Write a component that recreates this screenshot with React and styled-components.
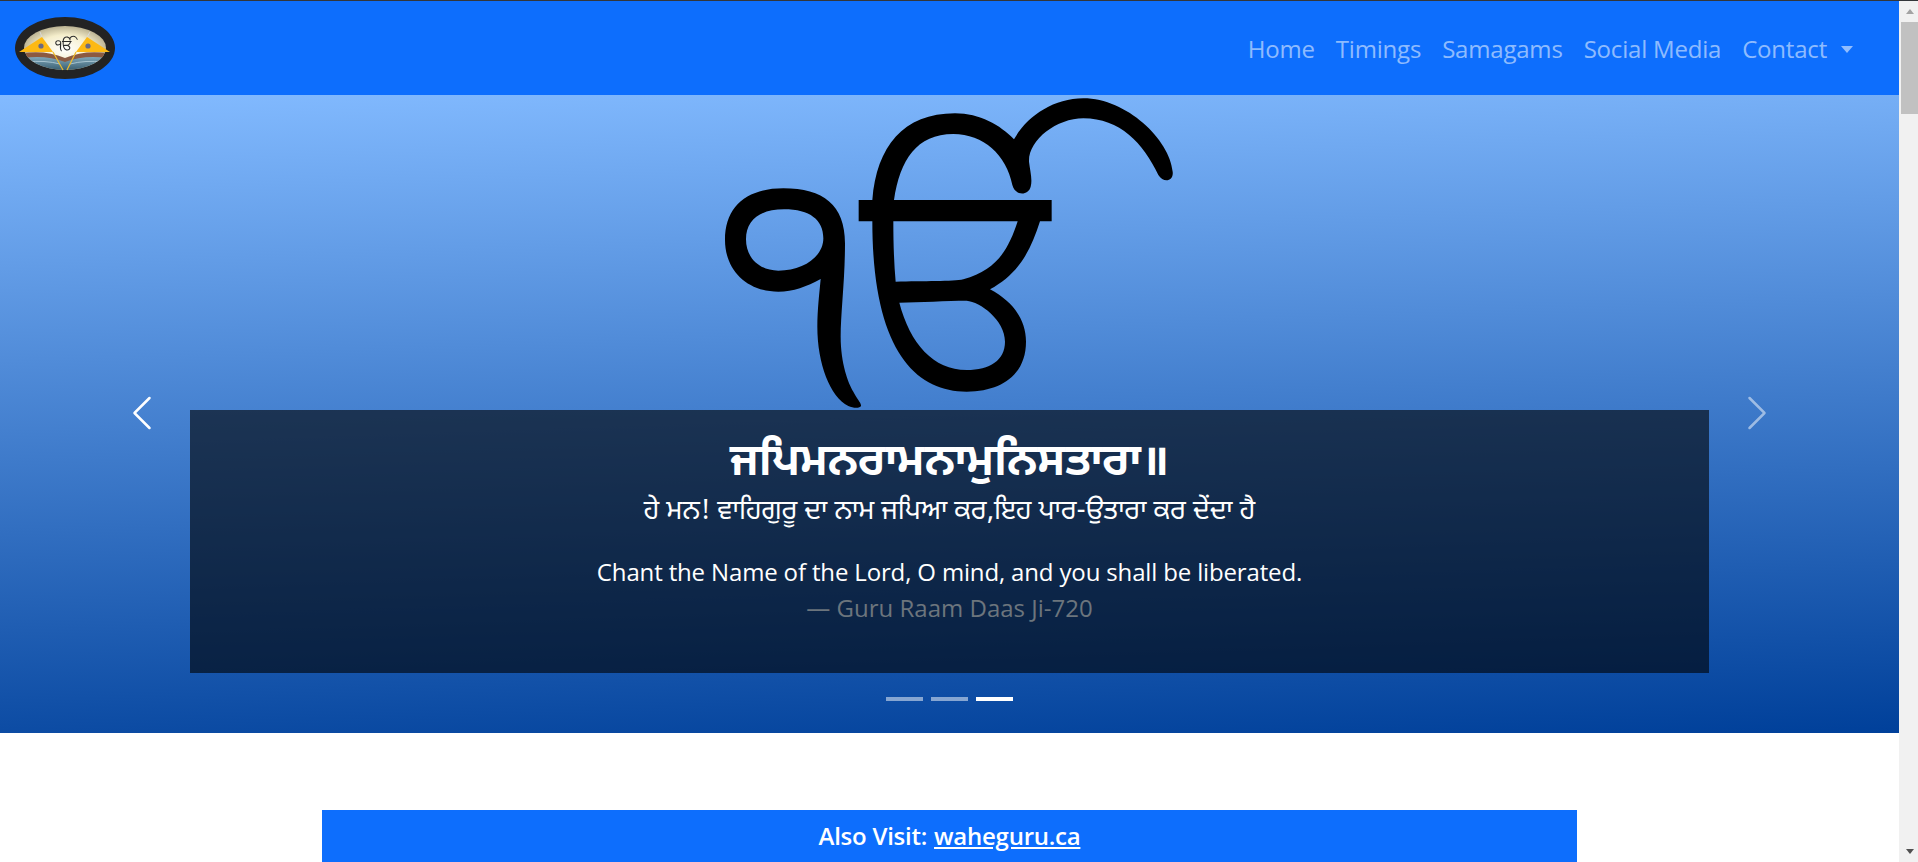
import React from 'react'
import styled, { createGlobalStyle } from 'styled-components'

const uiFont = `"Open Sans", "Noto Sans", "Liberation Sans", sans-serif`
const gurmukhiFont = `"Noto Sans Gurmukhi", "Lohit Gurmukhi", "Noto Sans", "Open Sans", sans-serif`

const GlobalStyle = createGlobalStyle`
  html, body {
    margin: 0;
    height: 862px;
    overflow: hidden;
    background: #fff;
    font-family: ${uiFont};
  }
`

const Shell = styled.div`
  height: 862px;
  display: flex;
  flex-direction: column;
  overflow: hidden;
  border-top: 1px solid #33363a;
  box-sizing: border-box;
`

const Viewport = styled.div`
  flex: 1;
  min-height: 0;
  display: flex;
`

const Page = styled.main`
  flex: 1;
  min-width: 0;
  overflow: hidden;
`

const Scrollbar = styled.div`
  width: 19px;
  flex: none;
  display: flex;
  flex-direction: column;
  align-items: flex-end;
  background: #f1f1f1;
`

const ScrollArrow = styled.div`
  width: 17px;
  height: 21px;
  display: flex;
  justify-content: center;
  align-items: center;
  margin-top: ${props => (props.$down ? 'auto' : '0')};

  &::before {
    content: '';
    border-left: 4.5px solid transparent;
    border-right: 4.5px solid transparent;
    border-${props => (props.$down ? 'top' : 'bottom')}: 5px solid ${props => (props.$down ? '#505050' : '#a3a3a3')};
  }
`

const ScrollThumb = styled.div`
  width: 17px;
  height: 92px;
  background: #c1c1c1;
`

const Navbar = styled.nav`
  height: 94px;
  box-sizing: border-box;
  padding: 0 46px 0 15px;
  display: flex;
  align-items: center;
  justify-content: space-between;
  background: #0d6efd;
`

const Menu = styled.ul`
  display: flex;
  align-items: center;
  gap: 21px;
  margin: 2px 0 0;
  padding: 0;
  list-style: none;
`

const MenuLink = styled.a`
  display: flex;
  align-items: center;
  font-size: 24px;
  line-height: 36px;
  letter-spacing: -0.2px;
  color: rgba(255, 255, 255, 0.55);
  text-decoration: none;
`

const Caret = styled.span`
  margin-left: 14px;
  border-top: 7px solid rgba(255, 255, 255, 0.55);
  border-left: 6px solid transparent;
  border-right: 6px solid transparent;
`

const Hero = styled.section`
  position: relative;
  height: 638px;
  display: flex;
  flex-direction: column;
  align-items: center;
  background: linear-gradient(178deg, #82baff 0%, #00409a 100%);
`

const IkOnkar = styled.svg`
  display: block;
  width: 460px;
  height: 315px;
`

const Caption = styled.div`
  position: absolute;
  left: 10%;
  right: 10%;
  top: 315px;
  height: 263px;
  box-sizing: border-box;
  padding-top: 25px;
  text-align: center;
  color: #fff;
  background: rgba(0, 0, 0, 0.6);
`

const Verse = styled.h1`
  margin: 0;
  font-family: ${gurmukhiFont};
  font-size: 44px;
  line-height: 60px;
  font-weight: 700;
`

const Meaning = styled.p`
  margin: 0;
  font-family: ${gurmukhiFont};
  font-size: 27px;
  line-height: 36px;
`

const Translation = styled.p`
  margin: 23px 0 0;
  font-size: 24px;
  line-height: 36px;
  letter-spacing: -0.15px;
`

const Attribution = styled.p`
  margin: 0;
  font-size: 24px;
  line-height: 36px;
  color: #6c757d;
`

const Control = styled.button`
  position: absolute;
  top: 0;
  bottom: 2px;
  ${props => (props.$side === 'left' ? 'left: 0;' : 'right: 0;')}
  width: 15%;
  padding: 0;
  display: flex;
  align-items: center;
  justify-content: center;
  border: 0;
  background: none;
  color: #fff;
  opacity: ${props => (props.$dim ? 0.5 : 1)};
`

const Indicators = styled.div`
  position: absolute;
  left: 0;
  right: 0;
  bottom: 32px;
  display: flex;
  justify-content: center;
  gap: 8px;
`

const Indicator = styled.span`
  width: 37px;
  height: 4px;
  background: #fff;
  opacity: ${props => (props.$active ? 1 : 0.5)};
`

const Content = styled.div`
  width: 1255px;
  margin: 77px auto 0;
`

const Banner = styled.div`
  height: 54px;
  box-sizing: border-box;
  padding-bottom: 3px;
  display: flex;
  align-items: center;
  justify-content: center;
  gap: 7px;
  background: #0d6efd;
  color: #fff;
  font-size: 24px;
  font-weight: 600;
  letter-spacing: -0.25px;

  a {
    color: inherit;
  }
`

const glyphPaths = (
  <>
    <path
      fillRule="evenodd"
      d="M422 597C380 620 340 635 295 635C200 635 135 570 135 480C135 380 200 325 310 325C430 325 495 375 495 490C495 600 482 700 482 770C482 850 505 910 520 935C530 955 545 970 543 978C540 985 520 985 505 978C450 950 412 850 412 740C412 690 418 640 422 597ZM312 388C240 388 198 420 198 478C198 535 240 572 295 572C370 572 430 530 430 475C430 420 390 388 312 388Z"
    />
    <path
      fillRule="evenodd"
      d="M577 360C590 200 670 100 825 100C900 100 960 135 1002 178C1040 110 1120 55 1210 55C1340 55 1470 180 1478 275C1482 305 1450 310 1435 285C1390 190 1320 115 1210 115C1130 115 1045 180 1047 245C1050 270 1058 300 1052 320C1045 348 1005 348 997 315C980 225 910 162 820 162C710 162 660 240 642 360L1115 360L1115 424L1080 424C1050 520 1010 585 930 628C1000 665 1038 720 1038 785C1038 880 970 935 860 935C700 935 577 800 577 424L536 424L536 360ZM640 424L1013 424C985 510 950 570 850 598C820 605 730 603 647 605C642 550 640 490 640 424ZM658 668C720 667 800 662 860 662C900 665 975 720 975 785C975 840 930 870 860 870C760 870 690 790 658 668Z"
    />
  </>
)

const Logo = () => (
  <svg width="100" height="62" viewBox="15 17 100 62" aria-label="logo">
    <defs>
      <radialGradient id="sky" cx="50%" cy="52%" r="58%">
        <stop offset="0%" stopColor="#ffffff" />
        <stop offset="55%" stopColor="#f5eecb" />
        <stop offset="100%" stopColor="#a89f80" />
      </radialGradient>
      <linearGradient id="water" x1="0" y1="0" x2="0" y2="1">
        <stop offset="0%" stopColor="#7fa6b8" />
        <stop offset="100%" stopColor="#2f5468" />
      </linearGradient>
      <clipPath id="inner">
        <ellipse cx="65" cy="48" rx="41" ry="22" />
      </clipPath>
    </defs>
    <ellipse cx="65" cy="48" rx="50" ry="31" fill="#232323" />
    <ellipse cx="65" cy="48" rx="41" ry="22" fill="url(#sky)" />
    <g clipPath="url(#inner)">
      <path d="M24 53Q46 50 65 58Q84 50 106 53V62H24Z" fill="#8b5a42" />
      <path d="M24 58Q46 55 65 62Q84 55 106 58V72H24Z" fill="url(#water)" />
      <path d="M26 62Q45 60 60 64M70 64Q85 60 104 62" stroke="#b9d2dc" strokeWidth="0.8" fill="none" />
    </g>
    <path d="M40 32L42 37M90 32L87 37" stroke="#d8d8d8" strokeWidth="1" />
    <path d="M42 37L19 52L53 52Z" fill="#fdb913" />
    <path d="M87 37L110 52L76 52Z" fill="#fdb913" />
    <path d="M53 52L63 70M76 52L67 70" stroke="#f0bb2a" strokeWidth="1.2" />
    <circle cx="41" cy="46" r="2.6" fill="#6a6a85" />
    <circle cx="88" cy="46" r="2.6" fill="#6a6a85" />
    <svg x="55" y="35" width="23" height="17" viewBox="120 45 1380 945" fill="#2a2a2a">
      {glyphPaths}
    </svg>
  </svg>
)

const Chevron = ({ flip }) => (
  <svg width="40" height="40" viewBox="0 0 16 16" fill="currentColor" style={flip ? { transform: 'scaleX(-1)' } : undefined}>
    <path d="M11.354 1.646a.5.5 0 0 1 0 .708L5.707 8l5.647 5.646a.5.5 0 0 1-.708.708l-6-6a.5.5 0 0 1 0-.708l6-6a.5.5 0 0 1 .708 0z" />
  </svg>
)

const links = ['Home', 'Timings', 'Samagams', 'Social Media']

export default function App() {
  return (
    <>
      <GlobalStyle />
      <Shell>
        <Viewport>
          <Page>
            <Navbar>
              <Logo />
              <Menu>
                {links.map(link => (
                  <li key={link}>
                    <MenuLink href="#">{link}</MenuLink>
                  </li>
                ))}
                <li>
                  <MenuLink href="#">
                    Contact
                    <Caret />
                  </MenuLink>
                </li>
              </Menu>
            </Navbar>
            <Hero>
              <IkOnkar viewBox="120 45 1380 945" fill="#000">
                {glyphPaths}
              </IkOnkar>
              <Control $side="left">
                <Chevron />
              </Control>
              <Control $side="right" $dim>
                <Chevron flip />
              </Control>
              <Caption>
                <Verse>ਜਪਿਮਨਰਾਮਨਾਮੁਨਿਸਤਾਰਾ॥</Verse>
                <Meaning>ਹੇ ਮਨ! ਵਾਹਿਗੁਰੂ ਦਾ ਨਾਮ ਜਪਿਆ ਕਰ,ਇਹ ਪਾਰ-ਉਤਾਰਾ ਕਰ ਦੇਂਦਾ ਹੈ</Meaning>
                <Translation>Chant the Name of the Lord, O mind, and you shall be liberated.</Translation>
                <Attribution>— Guru Raam Daas Ji-720</Attribution>
              </Caption>
              <Indicators>
                <Indicator />
                <Indicator />
                <Indicator $active />
              </Indicators>
            </Hero>
            <Content>
              <Banner>
                Also Visit: <a href="#">waheguru.ca</a>
              </Banner>
            </Content>
          </Page>
          <Scrollbar>
            <ScrollArrow />
            <ScrollThumb />
            <ScrollArrow $down />
          </Scrollbar>
        </Viewport>
      </Shell>
    </>
  )
}
